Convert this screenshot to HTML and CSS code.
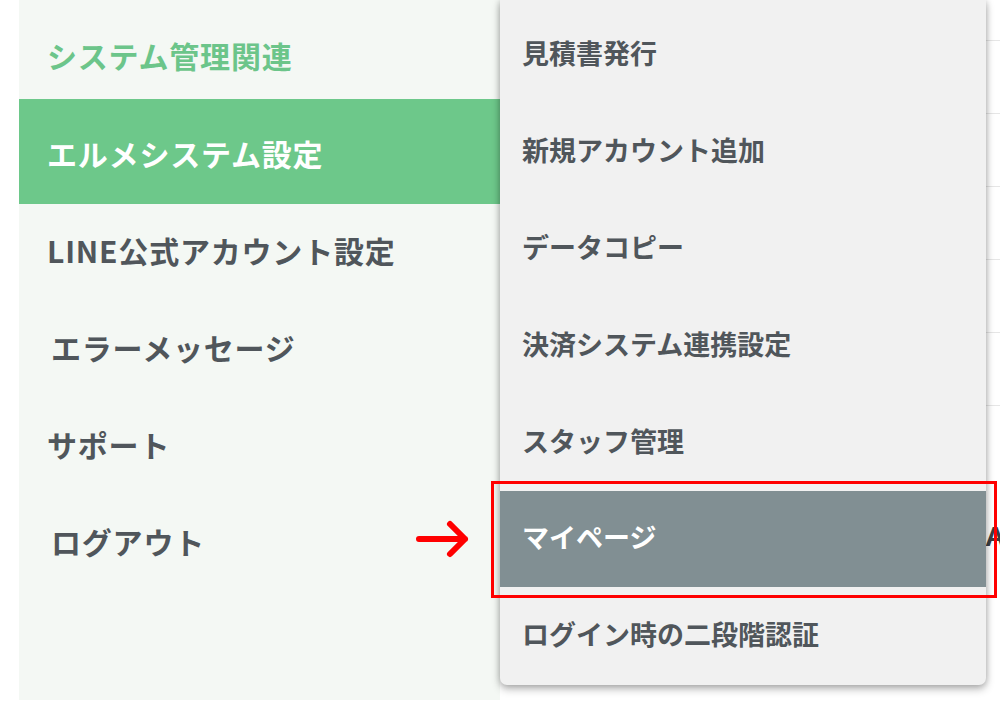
FILE: index.html
```html
<!DOCTYPE html>
<html lang="ja">
<head>
  <meta charset="UTF-8">
  <title>システム管理関連</title>
  <link rel="stylesheet" href="styles.css">
</head>
<body>
  <div class="page">
    <nav class="sidebar">
      <div class="side-head">システム管理関連</div>
      <a class="side-item active">エルメシステム設定</a>
      <a class="side-item">LINE公式アカウント設定</a>
      <a class="side-item nudge">エラーメッセージ</a>
      <a class="side-item">サポート</a>
      <a class="side-item nudge">ログアウト</a>
    </nav>
    <main class="content">
      <div class="row"></div>
      <div class="row"></div>
      <div class="row"></div>
      <div class="row"></div>
      <div class="row"></div>
      <div class="row"></div>
      <div class="row-text">A</div>
    </main>
  </div>

  <ul class="dropdown">
    <li>見積書発行</li>
    <li>新規アカウント追加</li>
    <li>データコピー</li>
    <li>決済システム連携設定</li>
    <li>スタッフ管理</li>
    <li class="current">マイページ</li>
    <li>ログイン時の二段階認証</li>
  </ul>

  <div class="mark-box"></div>
  <svg class="mark-arrow" width="60" height="40" viewBox="0 0 60 40">
    <path d="M4 20 H50 M35 5 L50 20 L35 35" fill="none" stroke="#ff0000" stroke-width="6" stroke-linecap="round" stroke-linejoin="round"/>
  </svg>
</body>
</html>
```

FILE: styles.css
```css
* {
  box-sizing: border-box;
}
body {
  margin: 0;
  background: #ffffff;
  font-family: "Noto Sans CJK JP", "Noto Sans", sans-serif;
  font-weight: 700;
  color: #50565b;
  overflow: hidden;
}
.page {
  display: flex;
  height: 706px;
}
.sidebar {
  margin-left: 19px;
  width: 481px;
  height: 700px;
  background: #f4f8f4;
  display: flex;
  flex-direction: column;
}
.side-head {
  height: 99px;
  padding: 10px 0 0 28px;
  display: flex;
  align-items: center;
  font-size: 30px;
  letter-spacing: 0.8px;
  color: #6cc58a;
}
.side-item {
  height: 97px;
  padding: 0 0 5px 28px;
  display: flex;
  align-items: center;
  font-size: 30px;
  letter-spacing: 0.8px;
  color: #50565b;
}
.side-item.active {
  height: 105px;
  padding: 3px 0 0 28px;
  background: #6dc88a;
  color: #ffffff;
}
.side-item.nudge {
  padding-left: 32px;
}
.content {
  flex: 1;
  padding-top: 40px;
  position: relative;
}
.row {
  height: 73px;
  border-top: 1px solid #e6e6e6;
}
.row-text {
  position: absolute;
  left: 485px;
  top: 520px;
  font-family: "Liberation Sans", sans-serif;
  font-size: 28px;
  line-height: 34px;
  color: #3c3f42;
}
.dropdown {
  position: absolute;
  left: 500px;
  top: 0;
  width: 486px;
  margin: 0;
  padding: 6px 0 1px;
  list-style: none;
  background: #f1f1f1;
  border-radius: 0 0 7px 7px;
  box-shadow: 0 4px 8px rgba(0, 0, 0, 0.28), 0 0 6px rgba(0, 0, 0, 0.18);
}
.dropdown li {
  height: 97px;
  padding: 0 0 5px 22px;
  display: flex;
  align-items: center;
  font-size: 27px;
  color: #50565b;
}
.dropdown li.current {
  height: 96px;
  background: #818f93;
  color: #ffffff;
}
.mark-box {
  position: absolute;
  left: 491px;
  top: 481px;
  width: 506px;
  height: 117px;
  border: 3px solid #ff0000;
}
.mark-arrow {
  position: absolute;
  left: 415px;
  top: 519px;
}
```
